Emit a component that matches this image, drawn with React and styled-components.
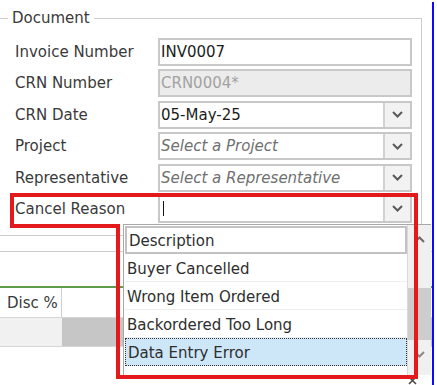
import React from "react";
import styled, { createGlobalStyle } from "styled-components";

const GlobalStyle = createGlobalStyle`
  body {
    margin: 0;
    background: #ffffff;
    font-family: "DejaVu Sans", "Liberation Sans", sans-serif;
  }
`;

const Page = styled.div`
  position: relative;
  width: 437px;
  height: 385px;
  overflow: hidden;
  display: flex;
  background: #ffffff;
`;

const Main = styled.div`
  width: 432px;
  display: flex;
  flex-direction: column;
`;

const BlueEdge = styled.div`
  width: 2px;
  margin-top: 2px;
  background: #0a0aff;
`;

const Group = styled.fieldset`
  box-sizing: border-box;
  width: 434px;
  margin: 9px 0 0 -12px;
  padding: 11px 9px 12px 26px;
  border: 1px solid #cdcdcd;
  display: flex;
  flex-direction: column;
  gap: 3.4px;
  min-width: 0;
`;

const Legend = styled.legend`
  margin-left: -7px;
  padding: 0 4px;
  font-size: 15px;
  line-height: 18px;
  color: #3a3a3a;
`;

const Row = styled.div`
  display: grid;
  grid-template-columns: 143px 1fr;
  align-items: center;
  height: 28px;
`;

const Label = styled.div`
  font-size: 15px;
  color: #3a3a3a;
  white-space: nowrap;
`;

const Field = styled.div`
  box-sizing: border-box;
  height: 28px;
  display: flex;
  align-items: stretch;
  border: 2px solid #c8c8c8;
  background: ${(p) => (p.$disabled ? "#ececec" : "#ffffff")};
`;

const Value = styled.div`
  flex: 1;
  display: flex;
  align-items: center;
  padding-left: 1px;
  font-size: 15px;
  white-space: nowrap;
  overflow: hidden;
  color: ${(p) => (p.$disabled ? "#a2a2a2" : p.$placeholder ? "#707070" : "#1c1c1c")};
  font-style: ${(p) => (p.$placeholder ? "italic" : "normal")};
`;

const Caret = styled.span`
  display: block;
  width: 1px;
  height: 15px;
  margin-left: 2px;
  background: #111;
`;

const DropButton = styled.div`
  width: 25px;
  display: flex;
  align-items: center;
  justify-content: center;
  background: #f2f2f2;
  border-left: 2px solid #d2d2d2;
`;

const Strip = styled.div`
  height: 18px;
  border-bottom: 1px solid #cdcdcd;
`;

const Table = styled.div`
  margin-top: 34px;
  border-top: 2px solid #5e9c4c;
  display: flex;
  flex-direction: column;
`;

const TableRow = styled.div`
  display: grid;
  grid-template-columns: 62px 1fr;
  height: ${(p) => p.$h}px;
  border-bottom: 1px solid #d6d6d6;
`;

const Cell = styled.div`
  display: flex;
  align-items: center;
  padding-left: 7px;
  font-size: 15px;
  color: #3a3a3a;
  background: ${(p) => p.$bg || "#ffffff"};
  border-right: ${(p) => (p.$divider ? "1px solid #cfcfcf" : "none")};
`;

const Footer = styled.div`
  margin: 29px 0 0 408px;
  display: flex;
`;

const Popup = styled.div`
  position: absolute;
  left: 123px;
  top: 224px;
  width: 307px;
  height: 150px;
  display: flex;
  background: #ffffff;
  border-top: 1px solid #a8a8a8;
  border-left: 1px solid #a8a8a8;
`;

const List = styled.div`
  flex: 1;
  padding: 1px 0 0 1px;
  display: flex;
  flex-direction: column;
`;

const Item = styled.div`
  box-sizing: border-box;
  height: 28px;
  display: flex;
  align-items: center;
  padding: 2px 0 0 2px;
  font-size: 15px;
  color: #2e2e2e;
  white-space: nowrap;
  background: ${(p) => (p.$selected ? "#cde6f8" : "#ffffff")};
  border: ${(p) =>
    p.$header ? "2px solid #c2c2c2" : p.$selected ? "1px dotted #333" : "none"};
  border-bottom: ${(p) =>
    p.$header ? "2px solid #c2c2c2" : p.$selected ? "1px dotted #333" : "1px solid #eeeeee"};
`;

const Scrollbar = styled.div`
  width: 23px;
  display: flex;
  flex-direction: column;
  align-items: stretch;
  background: #f0f0f0;
  border-left: 1px solid #d8d8d8;
`;

const ScrollArrow = styled.div`
  height: ${(p) => p.$h}px;
  display: flex;
  align-items: center;
  justify-content: center;
`;

const Thumb = styled.div`
  height: 52px;
  background: #cdcdcd;
`;

const Annotation = styled.svg`
  position: absolute;
  left: 0;
  top: 0;
  pointer-events: none;
`;

const Chevron = ({ up, color = "#5a5a5a" }) => (
  <svg width="11" height="7" viewBox="0 0 11 7">
    <polyline
      points={up ? "1,6 5.5,1.5 10,6" : "1,1 5.5,5.5 10,1"}
      fill="none"
      stroke={color}
      strokeWidth="2"
    />
  </svg>
);

const fields = [
  { label: "Invoice Number", value: "INV0007" },
  { label: "CRN Number", value: "CRN0004*", disabled: true },
  { label: "CRN Date", value: "05-May-25", drop: true },
  { label: "Project", value: "Select a Project", placeholder: true, drop: true },
  { label: "Representative", value: "Select a Representative", placeholder: true, drop: true },
  { label: "Cancel Reason", value: "", caret: true, drop: true },
];

const reasons = ["Buyer Cancelled", "Wrong Item Ordered", "Backordered Too Long", "Data Entry Error"];

export default function App() {
  return (
    <>
      <GlobalStyle />
      <Page>
        <Main>
          <Group>
            <Legend>Document</Legend>
            {fields.map((f) => (
              <Row key={f.label}>
                <Label>{f.label}</Label>
                <Field $disabled={f.disabled}>
                  <Value $disabled={f.disabled} $placeholder={f.placeholder}>
                    {f.caret ? <Caret /> : f.value}
                  </Value>
                  {f.drop && (
                    <DropButton>
                      <Chevron />
                    </DropButton>
                  )}
                </Field>
              </Row>
            ))}
          </Group>
          <Strip />
          <Table>
            <TableRow $h={29}>
              <Cell $divider>Disc %</Cell>
              <Cell />
            </TableRow>
            <TableRow $h={28}>
              <Cell $bg="#f1f1f1" />
              <Cell $bg="#c6c6c6" />
            </TableRow>
          </Table>
          <Footer>
            <svg width="9" height="9" viewBox="0 0 9 9">
              <path d="M1 1 L8 8 M8 1 L1 8" stroke="#4a4a4a" strokeWidth="1.6" />
            </svg>
          </Footer>
        </Main>
        <BlueEdge />

        <Popup>
          <List>
            <Item $header>Description</Item>
            {reasons.map((r, i) => (
              <Item key={r} $selected={i === reasons.length - 1}>
                {r}
              </Item>
            ))}
          </List>
          <Scrollbar>
            <ScrollArrow $h={28}>
              <Chevron up color="#6a6a6a" />
            </ScrollArrow>
            <div style={{ height: 35 }} />
            <Thumb />
            <ScrollArrow $h={28}>
              <Chevron color="#8a8a8a" />
            </ScrollArrow>
          </Scrollbar>
        </Popup>

        <Annotation width="437" height="385">
          <path
            d="M12 195 H416 V377 H118 V226 H12 Z"
            fill="none"
            stroke="#e3191c"
            strokeWidth="4"
          />
        </Annotation>
      </Page>
    </>
  );
}
